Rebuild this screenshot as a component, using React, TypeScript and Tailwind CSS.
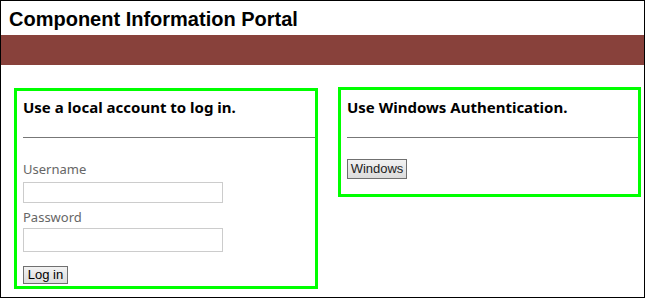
export default function App() {
  const body = { fontFamily: '"Noto Sans", "Open Sans", sans-serif' };
  return (
    <div className="w-[645px] h-[298px] border border-black bg-white overflow-hidden">
      <header className="h-[34px] px-[8px] pt-[6px]">
        <h1
          className="text-[20px] leading-[24px] font-bold text-black"
          style={{ fontFamily: '"Liberation Sans", Arial, sans-serif' }}
        >
          Component Information Portal
        </h1>
      </header>
      <div className="h-[30px] bg-[#88413b]" />
      <main className="flex items-start pt-[23px] pl-[13px] gap-[20px]" style={body}>
        <section className="w-[304px] h-[201px] border-[3px] border-[#00ff00] pl-[6px]">
          <h2 className="mt-[6px] text-[15px] leading-[20px] font-bold text-black">
            Use a local account to log in.
          </h2>
          <hr className="mt-[20px] border-0 border-t border-[#777]" />
          <form className="flex flex-col items-start" onSubmit={(e) => e.preventDefault()}>
            <label className="mt-[23px] text-[13px] leading-[16px] text-[#666]">Username</label>
            <input className="mt-[5px] w-[200px] h-[21px] border border-[#ccc] outline-none" />
            <label className="mt-[6px] text-[13px] leading-[16px] text-[#666]">Password</label>
            <input type="password" className="mt-[3px] w-[200px] h-[24px] border border-[#ccc] outline-none" />
            <button
              className="mt-[14px] w-[45px] h-[18px] border border-[#707070] bg-gradient-to-b from-[#f2f2f2] to-[#dcdcdc] text-[13px] leading-[14px] text-black"
              style={{ fontFamily: '"Liberation Sans", Arial, sans-serif' }}
            >
              Log in
            </button>
          </form>
        </section>
        <section className="-mt-[1px] w-[303px] h-[110px] border-[3px] border-[#00ff00] pl-[6px]">
          <h2 className="mt-[7px] text-[15px] leading-[20px] font-bold text-black">
            Use Windows Authentication.
          </h2>
          <hr className="mt-[20px] border-0 border-t border-[#777]" />
          <button
            className="mt-[21px] w-[60px] h-[20px] border border-[#707070] bg-gradient-to-b from-[#f2f2f2] to-[#dcdcdc] text-[13px] leading-[14px] text-[#222]"
            style={{ fontFamily: '"Liberation Sans", Arial, sans-serif' }}
          >
            Windows
          </button>
        </section>
      </main>
    </div>
  );
}
